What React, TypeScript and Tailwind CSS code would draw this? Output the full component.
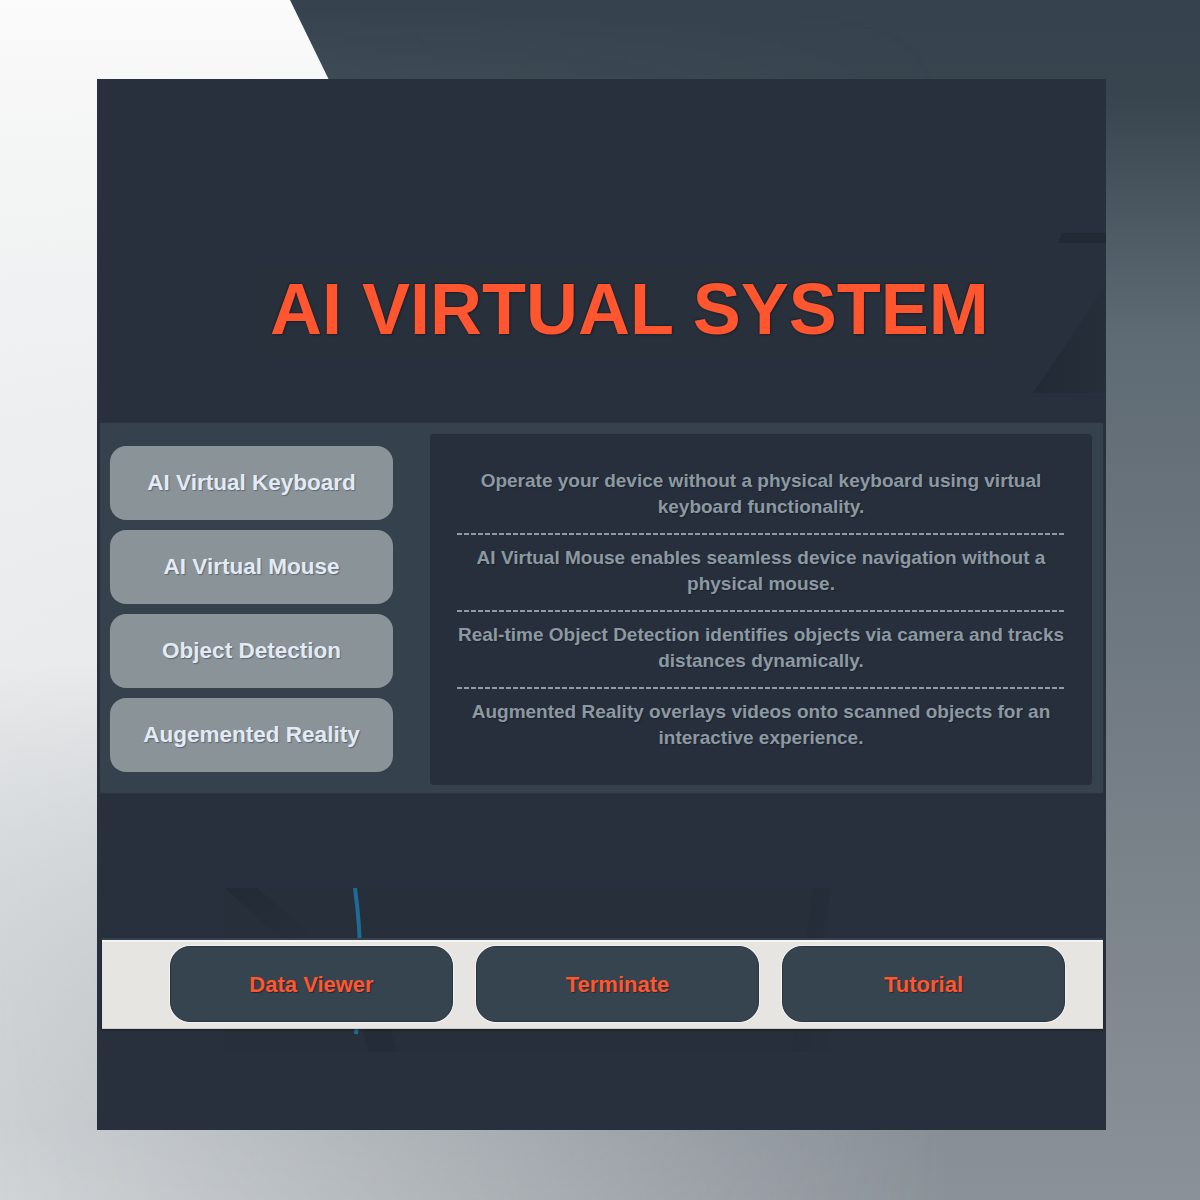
import React from 'react';

const features = [
    { label: 'AI Virtual Keyboard', text: ['Operate your device without a physical keyboard using virtual', 'keyboard functionality.'] },
    { label: 'AI Virtual Mouse', text: ['AI Virtual Mouse enables seamless device navigation without a', 'physical mouse.'] },
    { label: 'Object Detection', text: ['Real-time Object Detection identifies objects via camera and tracks', 'distances dynamically.'] },
    { label: 'Augemented Reality', text: ['Augmented Reality overlays videos onto scanned objects for an', 'interactive experience.'] },
];

const actions = ['Data Viewer', 'Terminate', 'Tutorial'];

function Decorations() {
    return (
        <svg className="absolute inset-0 pointer-events-none" width="1009" height="1051" viewBox="0 0 1009 1051">
            <defs>
                <linearGradient id="wedge" x1="0" y1="0" x2="1" y2="0">
                    <stop offset="0" stopColor="#202833" stopOpacity="0.9" />
                    <stop offset="1" stopColor="#252d38" stopOpacity="0.6" />
                </linearGradient>
                <linearGradient id="swoosh" x1="0" y1="0" x2="1" y2="1">
                    <stop offset="0" stopColor="#1f2731" stopOpacity="0.6" />
                    <stop offset="1" stopColor="#262e3a" stopOpacity="0.1" />
                </linearGradient>
            </defs>
            {/* top right */}
            <polygon points="965,154 1009,154 1009,164 961,164" fill="#212934" />
            <polygon points="1009,206 936,314 1009,314" fill="url(#wedge)" />
            {/* title backdrop */}
            <rect x="160" y="184" width="735" height="94" fill="#2a3340" opacity="0.3" />
            {/* bottom swoosh */}
            <rect x="128" y="809" width="605" height="164" fill="#252d39" opacity="0.3" />
            <polygon points="128,809 160,809 245,880 205,880" fill="url(#swoosh)" />
            <polygon points="262,940 290,940 300,973 272,973" fill="#222a35" opacity="0.5" />
            <polygon points="716,809 733,809 714,973 694,973" fill="url(#swoosh)" />
            <path d="M 258 809 Q 268 881 259 955" stroke="#1e6b96" strokeWidth="4" fill="none" />
        </svg>
    );
}

export default function App() {
    return (
        <div className="relative w-[1200px] h-[1200px] overflow-hidden font-['Liberation_Sans',Arial,sans-serif] bg-[linear-gradient(to_bottom,#36434e,#38454f_8%,#5f6b74_28%,#8b9198)]">
            {/* background washes */}
            <div className="absolute inset-0 bg-[linear-gradient(to_bottom,transparent,#d0d4d7)] [mask-image:linear-gradient(to_right,black,transparent_80%)]" />
            <div className="absolute inset-0 [clip-path:polygon(0_0,290px_0,875px_1200px,0_1200px)] bg-[linear-gradient(to_bottom,#fbfbfb,rgba(246,247,247,0.85)_55%,rgba(246,247,247,0)_94%)]" />

            <div className="relative pt-[79px] pl-[97px]">
                <main className="relative w-[1009px] h-[1051px] bg-[#27303c] overflow-hidden">
                    <Decorations />

                    <div className="relative flex flex-col">
                        {/* Title */}
                        <div className="h-[344px] pt-[194px] pl-[173px]">
                            <h1 className="text-[72px] leading-none font-bold text-[#ff5630] [text-shadow:1px_1px_2px_#16202b,-1px_-1px_1px_#1c2631]">
                                AI VIRTUAL SYSTEM
                            </h1>
                        </div>

                        {/* Features band */}
                        <div className="mx-[3px] h-[370px] bg-[#35424d] flex pl-[10px]">
                            <div className="flex flex-col pt-[23px] gap-[10px] w-[283px]">
                                {features.map((f) => (
                                    <button
                                        key={f.label}
                                        className="h-[74px] w-[283px] rounded-[16px] bg-[#899398] text-[22.5px] font-bold text-[#e2ebf5] [text-shadow:1px_1px_1px_rgba(60,70,80,0.55)]"
                                    >
                                        {f.label}
                                    </button>
                                ))}
                            </div>

                            <div className="ml-[37px] mt-[11px] w-[662px] h-[351px] rounded-[4px] bg-[#262f3b] flex flex-col items-center justify-center px-[26px]">
                                {features.map((f, i) => (
                                    <React.Fragment key={f.label}>
                                        {i > 0 && (
                                            <div className="w-[608px] h-[2px] mt-[13px] mb-[10px] bg-[repeating-linear-gradient(to_right,#8e9ba4_0_5px,transparent_5px_7px)]" />
                                        )}
                                        <p className="text-center text-[19px] leading-[26px] font-bold text-[#8c99a2] whitespace-nowrap [text-shadow:1px_1px_1px_#1b232d]">
                                            {f.text[0]}
                                            <br />
                                            {f.text[1]}
                                        </p>
                                    </React.Fragment>
                                ))}
                            </div>
                        </div>

                        {/* Action bar */}
                        <div className="ml-[5px] mt-[145px] w-[1001px] h-[91px] bg-[#e7e5e2] border-t-2 border-[#34424d] border-b border-b-[#cfccc8] shadow-[inset_0_2px_0_#f5f4f2,0_1px_2px_rgba(0,0,0,0.4)] flex items-center pl-[68px] gap-[23px]">
                            {actions.map((a) => (
                                <button
                                    key={a}
                                    className="h-[76px] w-[283px] rounded-[20px] bg-[#36444f] border-[1.5px] border-[#2a343e] shadow-[0_0_0_1px_rgba(255,255,255,0.5)] text-[22px] font-bold text-[#ff5630] [text-shadow:1px_1px_1px_#1f2a33]"
                                >
                                    {a}
                                </button>
                            ))}
                        </div>
                    </div>
                </main>
            </div>
        </div>
    );
}
